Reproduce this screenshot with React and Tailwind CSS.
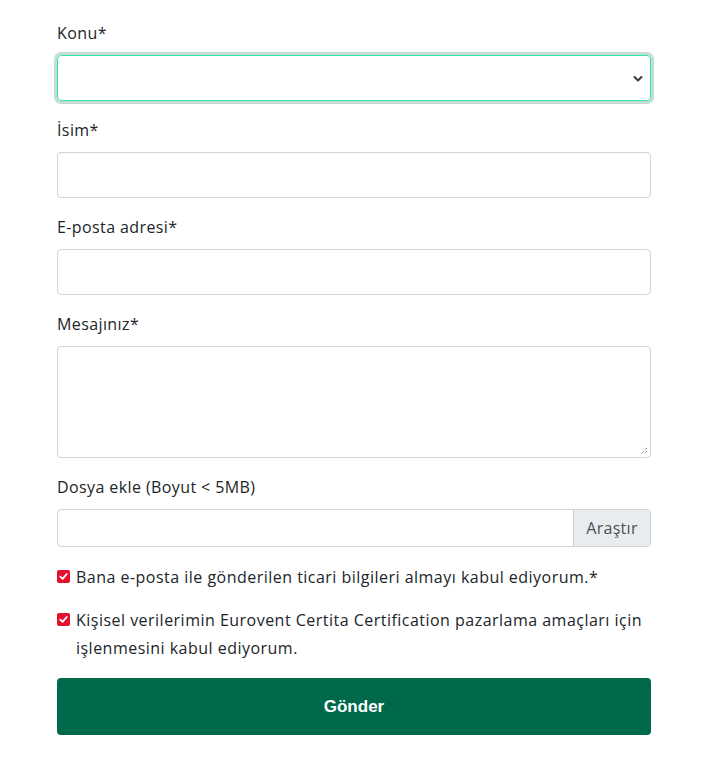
import React from "react";

const font = { fontFamily: '"Open Sans", "Noto Sans", sans-serif' };

function Label({ children }) {
  return (
    <div className="text-[16px] leading-[24px] mb-[10px] text-[#212529] tracking-[0.4px]">{children}</div>
  );
}

function Check({ children }) {
  return (
    <div className="flex items-start">
      <div className="w-[19px] shrink-0 pt-[7px]">
        <div className="w-[13px] h-[13px] rounded-[2px] bg-[#e4112e] flex items-center justify-center">
          <svg width="9" height="9" viewBox="0 0 10 10">
            <path d="M1.5 5.2 L4 7.6 L8.6 2.2" fill="none" stroke="white" strokeWidth="2" strokeLinecap="round" strokeLinejoin="round" />
          </svg>
        </div>
      </div>
      <div className="text-[16px] leading-[28px] text-[#212529] tracking-[0.48px]">{children}</div>
    </div>
  );
}

export default function App() {
  return (
    <div className="bg-white w-[705px] min-h-[767px] pt-[21px] px-[57px]" style={font}>
      <div className="w-[594px]">
        <Label>Konu*</Label>
        <div className="relative h-[46px] rounded-[4px] border border-[#2ee6ad] shadow-[0_0_0_3px_#c6ddd5]">
          <svg className="absolute right-[7px] top-[19px]" width="10" height="8" viewBox="0 0 10 8">
            <path d="M1.5 2 L5 5.5 L8.5 2" fill="none" stroke="#343a40" strokeWidth="2" strokeLinecap="round" strokeLinejoin="round" />
          </svg>
        </div>

        <div className="mt-[17px]">
          <Label>İsim*</Label>
          <div className="h-[46px] rounded-[4px] border border-[#ced4da]" />
        </div>

        <div className="mt-[17px]">
          <Label>E-posta adresi*</Label>
          <div className="h-[46px] rounded-[4px] border border-[#ced4da]" />
        </div>

        <div className="mt-[17px]">
          <Label>Mesajınız*</Label>
          <div className="relative h-[112px] rounded-[4px] border border-[#ced4da]">
            <svg className="absolute right-[2px] bottom-[2px]" width="9" height="9" viewBox="0 0 9 9">
              <path d="M8 2 L2 8 M8 5 L5 8" stroke="#6b6b6b" strokeWidth="1" strokeDasharray="1 1" />
            </svg>
          </div>
        </div>

        <div className="mt-[17px]">
          <Label>Dosya ekle (Boyut &lt; 5MB)</Label>
          <div className="flex h-[38px] rounded-[4px] border border-[#ced4da] overflow-hidden">
            <div className="flex-1" />
            <div className="w-[77px] bg-[#e9ecef] border-l border-[#ced4da] flex items-center justify-center text-[16px] tracking-[0.3px] text-[#495057]">
              Araştır
            </div>
          </div>
        </div>

        <div className="mt-[16px]">
          <Check>Bana e-posta ile gönderilen ticari bilgileri almayı kabul ediyorum.*</Check>
        </div>
        <div className="mt-[15px]">
          <Check>Kişisel verilerimin Eurovent Certita Certification pazarlama amaçları için işlenmesini kabul ediyorum.</Check>
        </div>

        <div
          className="mt-[16px] h-[57px] rounded-[4px] bg-[#00694c] flex items-center justify-center text-white text-[17px] font-bold"
          style={{ fontFamily: '"Liberation Sans", Arial, sans-serif' }}
        >
          Gönder
        </div>
      </div>
    </div>
  );
}
